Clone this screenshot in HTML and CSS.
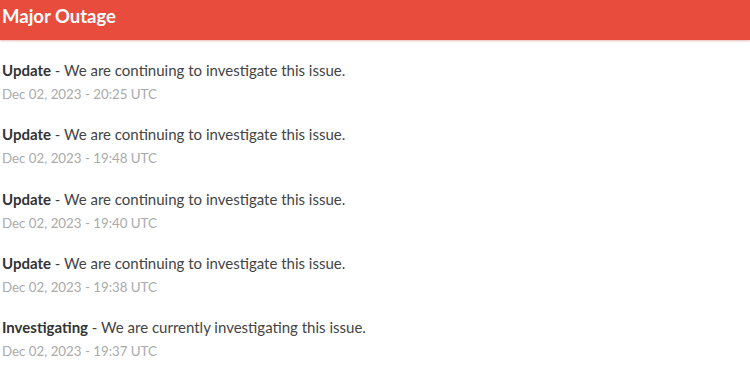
FILE: index.html
```html
<!DOCTYPE html>
<html lang="en">

<head>
    <meta charset="UTF-8">
    <meta name="viewport" content="width=device-width, initial-scale=1.0">
    <title>Incident</title>
    <link rel="stylesheet" href="styles.css">
</head>

<body>
    <div class="incident-header">Major Outage</div>
    <div class="updates">
        <div class="update-row">
            <div class="update-body"><strong>Update</strong> - We are continuing to investigate this issue.</div>
            <div class="update-time">Dec 02, 2023 - 20:25 UTC</div>
        </div>
        <div class="update-row">
            <div class="update-body"><strong>Update</strong> - We are continuing to investigate this issue.</div>
            <div class="update-time">Dec 02, 2023 - 19:48 UTC</div>
        </div>
        <div class="update-row">
            <div class="update-body"><strong>Update</strong> - We are continuing to investigate this issue.</div>
            <div class="update-time">Dec 02, 2023 - 19:40 UTC</div>
        </div>
        <div class="update-row">
            <div class="update-body"><strong>Update</strong> - We are continuing to investigate this issue.</div>
            <div class="update-time">Dec 02, 2023 - 19:38 UTC</div>
        </div>
        <div class="update-row">
            <div class="update-body"><strong>Investigating</strong> - We are currently investigating this issue.</div>
            <div class="update-time">Dec 02, 2023 - 19:37 UTC</div>
        </div>
    </div>
</body>

</html>
```

FILE: styles.css
```css
body {
    margin: 0;
    padding: 0;
    background: #fff;
    font-family: 'Lato', sans-serif;
    color: #333;
    overflow: hidden;
}

.incident-header {
    height: 40px;
    padding: 0 2px;
    background: #e74c3c;
    color: #fff;
    font-size: 18.5px;
    font-weight: bold;
    line-height: 32px;
    box-shadow: 0 1px 2px rgba(180, 60, 50, 0.35);
}

.updates {
    padding: 20px 2px 0;
}

.update-row {
    height: 64.25px;
}

.update-body {
    font-size: 15px;
    line-height: 20px;
    color: #444;
}

.update-body strong {
    color: #333;
}

.update-time {
    margin-top: 5px;
    font-size: 13.3px;
    line-height: 18px;
    color: #aaa;
}
```
